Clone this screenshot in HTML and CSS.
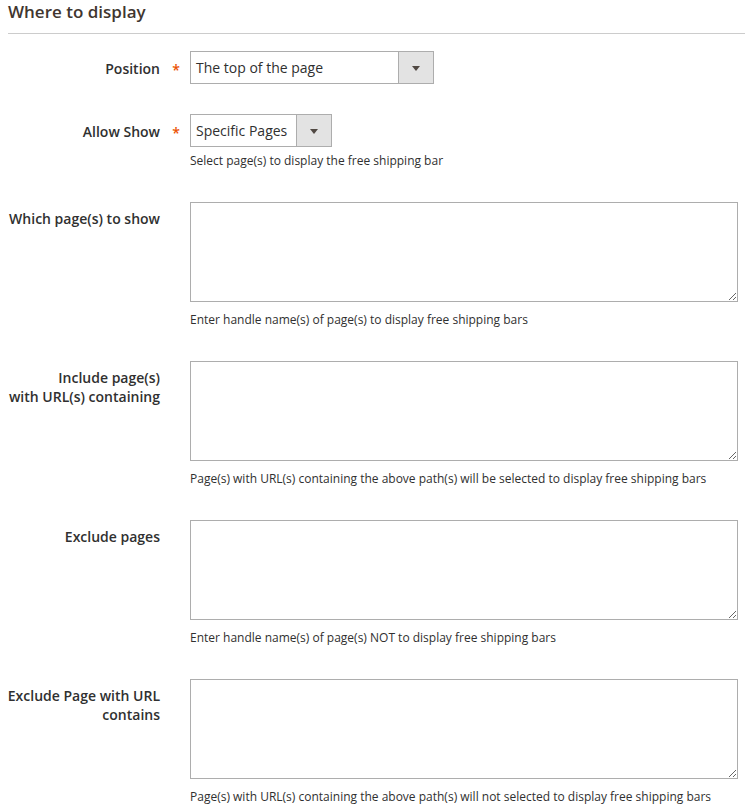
FILE: index.html
```html
<!DOCTYPE html>
<html>
<head>
<meta charset="utf-8">
<link rel="stylesheet" href="styles.css">
</head>
<body>
<div class="section">
  <h2 class="title">Where to display</h2>
  <div class="form">
    <div class="row row-first">
      <label class="label">Position</label>
      <span class="req">*</span>
      <div class="control">
        <div class="select select-wide"><span class="select-text">The top of the page</span><span class="select-btn"><span class="tri"></span></span></div>
      </div>
    </div>
    <div class="row">
      <label class="label">Allow Show</label>
      <span class="req">*</span>
      <div class="control">
        <div class="select select-narrow"><span class="select-text">Specific Pages</span><span class="select-btn"><span class="tri"></span></span></div>
        <div class="note note-select">Select page(s) to display the free shipping bar</div>
      </div>
    </div>
    <div class="row">
      <label class="label label-area">Which page(s) to show</label>
      <span class="req"></span>
      <div class="control">
        <textarea class="area"></textarea>
        <div class="note">Enter handle name(s) of page(s) to display free shipping bars</div>
      </div>
    </div>
    <div class="row">
      <label class="label label-area">Include page(s)<br>with URL(s) containing</label>
      <span class="req"></span>
      <div class="control">
        <textarea class="area"></textarea>
        <div class="note">Page(s) with URL(s) containing the above path(s) will be selected to display free shipping bars</div>
      </div>
    </div>
    <div class="row">
      <label class="label label-area">Exclude pages</label>
      <span class="req"></span>
      <div class="control">
        <textarea class="area"></textarea>
        <div class="note">Enter handle name(s) of page(s) NOT to display free shipping bars</div>
      </div>
    </div>
    <div class="row">
      <label class="label label-area">Exclude Page with URL contains</label>
      <span class="req"></span>
      <div class="control">
        <textarea class="area"></textarea>
        <div class="note">Page(s) with URL(s) containing the above path(s) will not selected to display free shipping bars</div>
      </div>
    </div>
  </div>
</div>
</body>
</html>
```
FILE: styles.css
```css
html, body {
  margin: 0;
  padding: 0;
  background: #ffffff;
}
body {
  font-family: "Open Sans", "Noto Sans", sans-serif;
  color: #303030;
}
.title {
  margin: 0 0 0 8px;
  font-size: 17px;
  font-weight: 600;
  color: #41362f;
  line-height: 24px;
  height: 34px;
  box-sizing: border-box;
  border-bottom: 1px solid #cccccc;
}
.form {
  padding-top: 17px;
}
.row {
  display: grid;
  grid-template-columns: 160px 30px 548px;
  margin-bottom: 33px;
}
.row-first {
  margin-bottom: 30px;
}
.label {
  font-size: 14px;
  font-weight: 600;
  color: #303030;
  text-align: right;
  line-height: 19px;
  padding-top: 8px;
}
.label-area {
  padding-top: 7px;
}
.req {
  color: #eb5202;
  font-size: 14px;
  font-weight: 600;
  line-height: 19px;
  padding-top: 9px;
  text-align: center;
  padding-left: 2px;
}
.control {
  display: flex;
  flex-direction: column;
  align-items: flex-start;
}
.select {
  display: flex;
  height: 33px;
  box-sizing: border-box;
  border: 1px solid #adadad;
  background: #ffffff;
}
.select-wide {
  width: 244px;
}
.select-narrow {
  width: 142px;
}
.select-text {
  flex: 1;
  font-size: 14px;
  line-height: 31px;
  padding-left: 5px;
  color: #303030;
}
.select-btn {
  width: 34px;
  border-left: 1px solid #adadad;
  background: #e3e3e3;
  display: flex;
  align-items: center;
  justify-content: center;
}
.tri {
  width: 0;
  height: 0;
  border-left: 4px solid transparent;
  border-right: 4px solid transparent;
  border-top: 5px solid #514943;
  margin-top: 1px;
}
.area {
  display: block;
  width: 548px;
  height: 100px;
  box-sizing: border-box;
  border: 1px solid #adadad;
  border-radius: 0;
  margin: 0;
  padding: 6px 8px;
  resize: vertical;
  font-family: inherit;
  background: #ffffff;
}
.note {
  font-size: 12px;
  line-height: 17px;
  color: #303030;
  margin-top: 9px;
}
.note-select {
  margin-top: 5px;
}
```
